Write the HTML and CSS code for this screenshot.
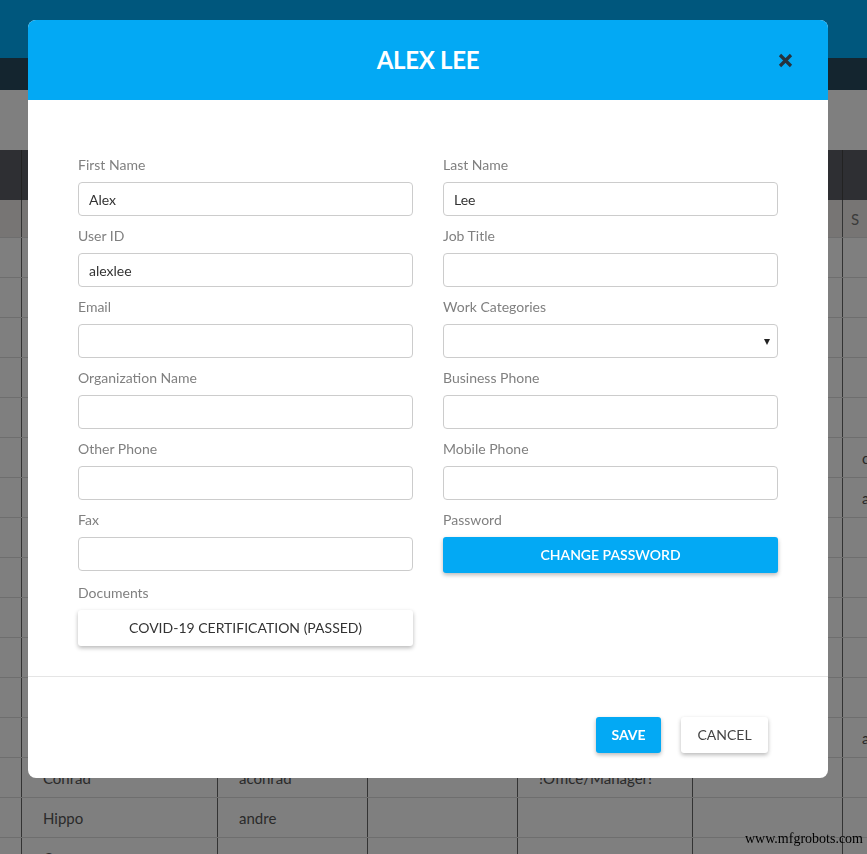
FILE: index.html
```html
<!DOCTYPE html>
<html lang="en">
<head>
<meta charset="utf-8">
<title>Edit User</title>
<link rel="stylesheet" href="styles.css">
</head>
<body>
<div class="app">
  <div class="topbar"></div>
  <div class="navbar"></div>
  <div class="toolbar"></div>
  <div class="grid">
    <div class="row head"><div class="cell"></div><div class="cell"></div><div class="cell"></div><div class="cell"></div><div class="cell"></div><div class="cell"></div><div class="cell"></div></div>
    <div class="row filter"><div class="cell"></div><div class="cell"></div><div class="cell"></div><div class="cell"></div><div class="cell"></div><div class="cell"></div><div class="cell">S</div></div>
    <div class="row"><div class="cell"></div><div class="cell"></div><div class="cell"></div><div class="cell"></div><div class="cell"></div><div class="cell"></div><div class="cell"></div></div>
    <div class="row"><div class="cell"></div><div class="cell"></div><div class="cell"></div><div class="cell"></div><div class="cell"></div><div class="cell"></div><div class="cell"></div></div>
    <div class="row"><div class="cell"></div><div class="cell"></div><div class="cell"></div><div class="cell"></div><div class="cell"></div><div class="cell"></div><div class="cell"></div></div>
    <div class="row"><div class="cell"></div><div class="cell"></div><div class="cell"></div><div class="cell"></div><div class="cell"></div><div class="cell"></div><div class="cell"></div></div>
    <div class="row"><div class="cell"></div><div class="cell"></div><div class="cell"></div><div class="cell"></div><div class="cell"></div><div class="cell"></div><div class="cell"></div></div>
    <div class="row"><div class="cell"></div><div class="cell"></div><div class="cell"></div><div class="cell"></div><div class="cell"></div><div class="cell"></div><div class="cell">c</div></div>
    <div class="row"><div class="cell"></div><div class="cell"></div><div class="cell"></div><div class="cell"></div><div class="cell"></div><div class="cell"></div><div class="cell">a</div></div>
    <div class="row"><div class="cell"></div><div class="cell"></div><div class="cell"></div><div class="cell"></div><div class="cell"></div><div class="cell"></div><div class="cell"></div></div>
    <div class="row"><div class="cell"></div><div class="cell"></div><div class="cell"></div><div class="cell"></div><div class="cell"></div><div class="cell"></div><div class="cell"></div></div>
    <div class="row"><div class="cell"></div><div class="cell"></div><div class="cell"></div><div class="cell"></div><div class="cell"></div><div class="cell"></div><div class="cell"></div></div>
    <div class="row"><div class="cell"></div><div class="cell"></div><div class="cell"></div><div class="cell"></div><div class="cell"></div><div class="cell"></div><div class="cell"></div></div>
    <div class="row"><div class="cell"></div><div class="cell"></div><div class="cell"></div><div class="cell"></div><div class="cell"></div><div class="cell"></div><div class="cell"></div></div>
    <div class="row"><div class="cell"></div><div class="cell"></div><div class="cell"></div><div class="cell"></div><div class="cell"></div><div class="cell"></div><div class="cell">a</div></div>
    <div class="row"><div class="cell"></div><div class="cell">Conrad</div><div class="cell">aconrad</div><div class="cell"></div><div class="cell">!Office/Manager!</div><div class="cell"></div><div class="cell"></div></div>
    <div class="row"><div class="cell"></div><div class="cell">Hippo</div><div class="cell">andre</div><div class="cell"></div><div class="cell"></div><div class="cell"></div><div class="cell"></div></div>
    <div class="row"><div class="cell"></div><div class="cell">Cruz</div><div class="cell"></div><div class="cell"></div><div class="cell"></div><div class="cell"></div><div class="cell"></div></div>
  </div>
</div>

<div class="overlay">
  <div class="modal">
    <div class="modal-header">
      <h1 class="modal-title">ALEX LEE</h1>
      <button class="close" aria-label="Close">
        <svg width="15" height="15" viewBox="0 0 15 15"><path d="M2 2 L13 13 M13 2 L2 13" stroke="#26323d" stroke-width="3.2" stroke-linecap="butt" fill="none"/></svg>
      </button>
    </div>
    <div class="modal-body">
      <div class="field"><label class="label">First Name</label><input class="input" value="Alex"></div>
      <div class="field"><label class="label">Last Name</label><input class="input" value="Lee"></div>
      <div class="field"><label class="label">User ID</label><input class="input" value="alexlee"></div>
      <div class="field"><label class="label">Job Title</label><input class="input" value=""></div>
      <div class="field"><label class="label">Email</label><input class="input" value=""></div>
      <div class="field"><label class="label">Work Categories</label><div class="select"><span class="caret"></span></div></div>
      <div class="field"><label class="label">Organization Name</label><input class="input" value=""></div>
      <div class="field"><label class="label">Business Phone</label><input class="input" value=""></div>
      <div class="field"><label class="label">Other Phone</label><input class="input" value=""></div>
      <div class="field"><label class="label">Mobile Phone</label><input class="input" value=""></div>
      <div class="field"><label class="label">Fax</label><input class="input" value=""></div>
      <div class="field"><label class="label">Password</label><button class="btn btn-primary btn-block">CHANGE PASSWORD</button></div>
      <div class="field"><label class="label">Documents</label><button class="btn btn-default btn-block">COVID-19 CERTIFICATION (PASSED)</button></div>
    </div>
    <div class="modal-footer">
      <button class="btn btn-primary btn-save">SAVE</button>
      <button class="btn btn-default btn-cancel">CANCEL</button>
    </div>
  </div>
</div>

<div class="watermark">www.mfgrobots.com</div>
</body>
</html>
```

FILE: styles.css
```css
* { box-sizing: border-box; }

html, body {
  margin: 0;
  padding: 0;
  width: 867px;
  height: 854px;
  overflow: hidden;
}

body {
  font-family: Lato, "Open Sans", "Liberation Sans", sans-serif;
  font-size: 14px;
  color: #333;
  background: #fff;
}

/* ---------- background app ---------- */
.app {
  width: 867px;
}

.topbar {
  height: 58px;
  background: #00aefa;
}

.navbar {
  height: 32px;
  background: #284a5e;
}

.toolbar {
  height: 60px;
  background: #fff;
}

.grid {
  display: flex;
  flex-direction: column;
}

.row {
  display: grid;
  grid-template-columns: 21px 196px 150px 150px 175px 150px 25px;
  height: 40px;
  border-top: 1px solid #dcdcdc;
  background: #fff;
}

.row.head {
  height: 50px;
  border-top: none;
  background: #5c5e66;
}

.row.filter {
  height: 37px;
  border-top: none;
  background: #efebe8;
}

.cell {
  border-left: 1px solid #666;
  padding-left: 21px;
  display: flex;
  align-items: center;
  font-size: 15px;
  color: #555;
  white-space: nowrap;
  overflow: hidden;
}

.cell:first-child {
  border-left: none;
  padding-left: 0;
}

.row.head .cell {
  border-left-color: #444;
}

.row .cell:last-child {
  padding-left: 19px;
}

.row.filter .cell:last-child {
  padding-left: 8px;
  color: #777;
}

/* ---------- overlay + modal ---------- */
.overlay {
  position: fixed;
  inset: 0;
  background: rgba(0, 0, 0, 0.5);
  padding: 20px 0 0 28px;
}

.modal {
  width: 800px;
  background: #fff;
  border-radius: 8px;
  overflow: hidden;
}

.modal-header {
  position: relative;
  height: 80px;
  background: #03a9f4;
  display: flex;
  align-items: center;
  justify-content: center;
}

.modal-title {
  margin: 0 0 2px;
  font-family: Lato, "Liberation Sans", sans-serif;
  font-weight: 700;
  font-size: 24px;
  color: #fff;
  letter-spacing: -0.3px;
}

.close {
  position: absolute;
  right: 35px;
  top: 33px;
  width: 15px;
  height: 15px;
  padding: 0;
  border: none;
  background: transparent;
  display: flex;
}

.modal-body {
  display: grid;
  grid-template-columns: 335px 335px;
  column-gap: 30px;
  row-gap: 10px;
  padding: 55px 50px 30px;
}

.field {
  display: flex;
  flex-direction: column;
}

.label {
  line-height: 20px;
  margin-bottom: 7px;
  color: #808080;
  font-size: 14px;
}

.input,
.select {
  height: 34px;
  border: 1px solid #ccc;
  border-radius: 4px;
  padding: 0 10px;
  font-family: Lato, "Liberation Sans", sans-serif;
  font-size: 14px;
  color: #333;
  background: #fff;
  outline: none;
}

.select {
  position: relative;
}

.caret {
  position: absolute;
  right: 7px;
  top: 14px;
  width: 0;
  height: 0;
  border-left: 3.5px solid transparent;
  border-right: 3.5px solid transparent;
  border-top: 6px solid #222;
}

.btn {
  height: 36px;
  border: none;
  border-radius: 3px;
  padding: 0 0 2px;
  font-family: Lato, "Liberation Sans", sans-serif;
  font-size: 14px;
  cursor: pointer;
  box-shadow: 0 2px 4px rgba(0, 0, 0, 0.28);
}

.btn-block {
  width: 100%;
}

.btn-primary {
  background: #03a9f4;
  color: #fff;
  font-weight: 600;
}

.btn-default {
  background: #fff;
  color: #333;
  font-weight: 400;
}

.modal-footer {
  border-top: 1px solid #e5e5e5;
  padding: 40px 60px 25px;
  display: flex;
  justify-content: flex-end;
  gap: 20px;
}

.btn-save {
  width: 65px;
  font-weight: 700;
}

.btn-cancel {
  width: 87px;
  color: #444;
}

.watermark {
  position: fixed;
  right: 4px;
  bottom: 7px;
  font-family: "Liberation Serif", "DejaVu Serif", serif;
  font-size: 14px;
  color: #000;
}
```
